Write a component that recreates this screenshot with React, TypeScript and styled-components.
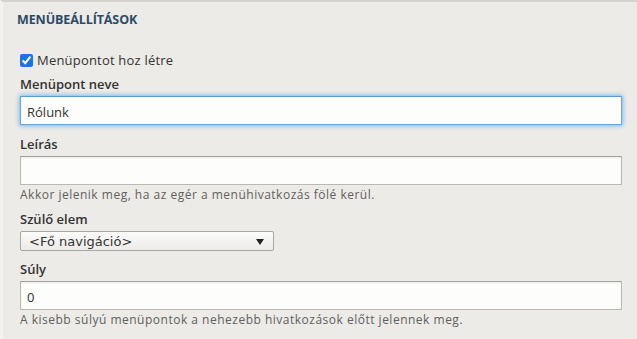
import React from "react";
import styled, { createGlobalStyle } from "styled-components";

const GlobalStyle = createGlobalStyle`
  html, body {
    margin: 0;
    padding: 0;
    background: #ecebe7;
  }
  body {
    font-family: "Open Sans", "Liberation Sans", sans-serif;
    color: #333;
  }
`;

const Panel = styled.fieldset`
  margin: 0;
  min-width: 0;
  height: 339px;
  box-sizing: border-box;
  border: none;
  border-top: 2px solid #d3d2ce;
  border-left: 3px solid #f3f2ef;
  padding: 9px 16px 0 14px;
  background: #ecebe7;
`;

const Legend = styled.div`
  font-size: 12.5px;
  font-weight: 700;
  color: #2c4a68;
  text-transform: uppercase;
  letter-spacing: -0.1px;
  line-height: 18px;
  margin-bottom: 22px;
`;

const Item = styled.div<{ $gap?: number }>`
  display: flex;
  flex-direction: column;
  padding-left: 3px;
  margin-bottom: ${(p) => p.$gap ?? 10}px;
`;

const CheckRow = styled.label`
  display: flex;
  align-items: center;
  gap: 4px;
  font-size: 13px;
  letter-spacing: 0.2px;
  line-height: 18px;
  color: #333;
  padding-left: 3px;
  margin-bottom: 7px;
`;

const Check = styled.input`
  margin: 0;
  width: 13px;
  height: 13px;
  accent-color: #1a73e8;
`;

const Label = styled.label`
  font-size: 13px;
  font-weight: 600;
  line-height: 17px;
  color: #333;
  margin-bottom: 3px;
`;

const TextInput = styled.input<{ $focused?: boolean }>`
  box-sizing: border-box;
  width: 602px;
  height: 29px;
  margin: 0;
  padding: 2px 6px 0;
  font-family: "Open Sans", "Liberation Sans", sans-serif;
  font-size: 13px;
  color: #333;
  background: #fdfdfc;
  border: 1px solid ${(p) => (p.$focused ? "#6aa6d9" : "#b9b8b4")};
  border-top-color: ${(p) => (p.$focused ? "#5a9bd4" : "#a3a29e")};
  border-radius: 1px;
  box-shadow: ${(p) =>
    p.$focused
      ? "0 0 4px 1px rgba(80, 170, 240, 0.75)"
      : "inset 0 1px 2px rgba(0,0,0,0.08)"};
  outline: none;
  caret-color: #000;
`;

const Help = styled.div`
  font-size: 12px;
  line-height: 15px;
  letter-spacing: 0.5px;
  color: #5f5f5f;
  margin-top: 2px;
`;

const SelectBox = styled.div`
  box-sizing: border-box;
  width: 254px;
  height: 20px;
  display: flex;
  align-items: center;
  justify-content: space-between;
  padding: 0 9px 0 8px;
  font-family: "DejaVu Sans", "Liberation Sans", sans-serif;
  font-size: 13px;
  color: #333;
  background: linear-gradient(#fbfbfa, #ecebe8);
  border: 1px solid #a9a8a4;
  border-radius: 2px;
`;

const Arrow = styled.span`
  width: 0;
  height: 0;
  border-left: 4.5px solid transparent;
  border-right: 4.5px solid transparent;
  border-top: 6px solid #222;
  margin-top: 2px;
`;

export default function App() {
  return (
    <>
      <GlobalStyle />
      <Panel>
        <Legend>Menübeállítások</Legend>
        <CheckRow>
          <Check type="checkbox" defaultChecked />
          Menüpontot hoz létre
        </CheckRow>
        <Item $gap={11}>
          <Label>Menüpont neve</Label>
          <TextInput $focused defaultValue="Rólunk" />
        </Item>
        <Item $gap={9}>
          <Label>Leírás</Label>
          <TextInput />
          <Help>Akkor jelenik meg, ha az egér a menühivatkozás fölé kerül.</Help>
        </Item>
        <Item $gap={10}>
          <Label>Szülő elem</Label>
          <SelectBox>
            <span>&lt;Fő navigáció&gt;</span>
            <Arrow />
          </SelectBox>
        </Item>
        <Item>
          <Label>Súly</Label>
          <TextInput defaultValue="0" />
          <Help>A kisebb súlyú menüpontok a nehezebb hivatkozások előtt jelennek meg.</Help>
        </Item>
      </Panel>
    </>
  );
}
